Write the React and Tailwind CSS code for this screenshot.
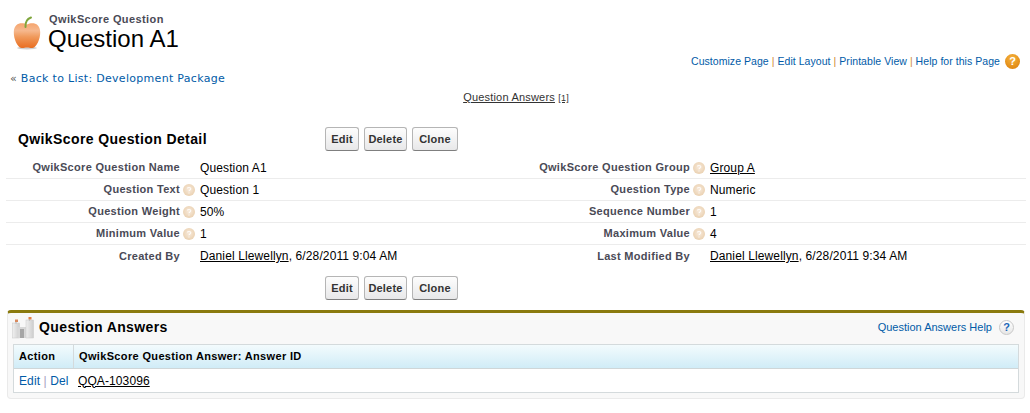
import React from "react";

const sans = "font-['Liberation_Sans',Arial,sans-serif]";

function Apple() {
  return (
    <svg width="28" height="36" viewBox="0 0 28 36" className="shrink-0 overflow-visible">
      <defs>
        <linearGradient id="ap" x1="0" y1="0" x2="0" y2="1">
          <stop offset="0" stopColor="#f5a56e" />
          <stop offset="0.3" stopColor="#f6b88e" />
          <stop offset="0.55" stopColor="#f09a5c" />
          <stop offset="1" stopColor="#e96d20" />
        </linearGradient>
      </defs>
      <ellipse cx="14" cy="33" rx="10" ry="1.500" fill="#cfcfcf" />
      <path d="M14 9.500C9 7 1 7.500 .8 17c-.2 7 3.700 15.500 7.700 16 2 .2 3.500-.5 5.500-.5s3.500 .7 5.500 .5c4-.5 7.900-9 7.700-16C27 7.500 19 7 14 9.500Z" fill="url(#ap)" />
      <path d="M12.500 12c-.3-4 1.500-8 5.500-9.500" fill="none" stroke="#7fa63c" strokeWidth="2" strokeLinecap="round" />
    </svg>
  );
}

function Hint() {
  return (
    <svg width="12" height="12" viewBox="0 0 12 12" className="block">
      <defs>
        <radialGradient id="hg" cx="0.5" cy="0.45" r="0.6">
          <stop offset="0" stopColor="#f8eadb" />
          <stop offset="1" stopColor="#e9cfae" />
        </radialGradient>
      </defs>
      <circle cx="6" cy="6" r="6" fill="url(#hg)" />
      <path d="M4.300 4.500c.2-1.300 3.500-1.500 3.500.3 0 1.200-1.800 1.200-1.800 2.500M6 8.600v1" fill="none" stroke="#fff" strokeWidth="1.100" opacity="0.85" />
    </svg>
  );
}

function Row({ l1, h1, v1, l2, h2, v2, link2 }) {
  return (
    <div className="flex h-[22px] items-center border-b border-[#ececec]">
      <Cell label={l1} hint={h1} value={v1} valueW="w-[336px]" />
      <Cell label={l2} hint={h2} value={v2} link={link2} valueW="flex-1" />
    </div>
  );
}

function Cell({ label, hint, value, link, valueW }) {
  return (
    <div className={`flex items-center ${valueW === "flex-1" ? "flex-1" : ""}`}>
      <div className="w-[174px] text-right text-[11px] font-bold tracking-[0.3px] text-[#4a4a56] relative">
        <span className="whitespace-nowrap">{label}</span>
        {hint && <span className="absolute right-[-15px] top-1/2 -translate-y-1/2"><Hint /></span>}
      </div>
      <div className={`pl-[20px] text-[12px] tracking-[0.12px] text-black whitespace-nowrap ${valueW}`}>
        {link ? <><a className="underline">{link}</a>{value}</> : value}
      </div>
    </div>
  );
}

function Btn({ children, w }) {
  return (
    <button className={`${w} h-[24px] rounded-[3px] border border-[#b5b5b5] border-b-[#7f7f7f] bg-[linear-gradient(#fdfdfd,#e8e8e9)] text-[11px] font-bold tracking-[0.2px] text-[#333]`}>
      {children}
    </button>
  );
}

function Buttons() {
  return (
    <div className="flex gap-[5px]">
      <Btn w="w-[34px]">Edit</Btn>
      <Btn w="w-[43px]">Delete</Btn>
      <Btn w="w-[46px]">Clone</Btn>
    </div>
  );
}

function Castle() {
  return (
    <svg width="22" height="22" viewBox="0 0 22 22" className="shrink-0">
      <defs>
        <linearGradient id="cg" x1="0" y1="0" x2="1" y2="0">
          <stop offset="0" stopColor="#f0f0f0" />
          <stop offset="1" stopColor="#cdcdcd" />
        </linearGradient>
      </defs>
      <rect x="0.500" y="6" width="7" height="15" fill="url(#cg)" stroke="#c8c8c8" strokeWidth="0.500" />
      <rect x="6" y="10" width="9" height="11" fill="#d8d8d8" />
      <rect x="8" y="12" width="4" height="9" fill="#a6a6a6" />
      <rect x="14" y="3" width="7.500" height="18" fill="url(#cg)" stroke="#c8c8c8" strokeWidth="0.500" />
      <rect x="3" y="2.500" width="3" height="2.500" fill="#d98a5e" />
      <rect x="16.500" y="0" width="3" height="2.500" fill="#e27f45" />
      <rect x="3.500" y="5" width="1" height="1.500" fill="#aaa" />
      <rect x="17" y="2.500" width="1" height="1" fill="#aaa" />
    </svg>
  );
}

export default function App() {
  return (
    <div className={`${sans} w-[1030px] h-[413px] bg-white overflow-hidden text-[12px]`}>
      <div className="flex pl-[13px] pt-[15px] h-[52px]">
        <Apple />
        <div className="ml-[7px]">
          <div className="ml-[1px] mt-[-2px] text-[11px] font-bold tracking-[0.4px] text-[#4a4a56] leading-[13px]">QwikScore Question</div>
          <div className="text-[24px] leading-[26px] text-black">Question A1</div>
        </div>
      </div>

      <div className="flex justify-end items-center pr-[10px] h-[17px] mt-[1px]">
        <span className="text-[10.500px] tracking-[0.05px] text-[#015ba7] whitespace-nowrap">
          Customize Page <span className="text-[#d08a35]">|</span> Edit Layout <span className="text-[#d08a35]">|</span> Printable View <span className="text-[#d08a35]">|</span> Help for this Page
        </span>
        <span className="ml-[5px] w-[15px] h-[15px] rounded-full bg-[radial-gradient(circle_at_45%_30%,#f6b33d,#d97a05)] text-white text-[11px] font-bold leading-[15px] text-center">?</span>
      </div>

      <div className="pl-[10px] mt-[1px] h-[19px] font-['DejaVu_Sans',Verdana,sans-serif] text-[11px] tracking-[0.3px] leading-[16px] text-[#015ba7]">
        <span className="text-[#555]">«</span> Back to List: Development Package
      </div>

      <div className="text-center h-[14px] text-[11px] tracking-[0.2px] leading-[14px] text-[#333] pl-[2px]">
        <a className="underline">Question Answers</a> <span className="text-[9px] underline">[1]</span>
      </div>

      <div className="mx-[6px] mt-[23px] w-[1020px]">
        <div className="flex items-center h-[24px]">
          <div className="w-[319px] pl-[12px] text-[14px] tracking-[0.4px] font-bold text-black">QwikScore Question Detail</div>
          <Buttons />
        </div>
        <div className="mt-[6px]">
          <Row l1="QwikScore Question Name" v1="Question A1" l2="QwikScore Question Group" h2 link2="Group A" />
          <Row l1="Question Text" h1 v1="Question 1" l2="Question Type" h2 v2="Numeric" />
          <Row l1="Question Weight" h1 v1="50%" l2="Sequence Number" h2 v2="1" />
          <Row l1="Minimum Value" h1 v1="1" l2="Maximum Value" h2 v2="4" />
        </div>
        <div className="flex h-[22px] items-center">
          <Cell label="Created By" link="Daniel Llewellyn" value=", 6/28/2011 9:04 AM" valueW="w-[336px]" />
          <Cell label="Last Modified By" link="Daniel Llewellyn" value=", 6/28/2011 9:34 AM" valueW="flex-1" />
        </div>
        <div className="flex pl-[319px] mt-[9px]"><Buttons /></div>
      </div>

      <div className="ml-[7px] mt-[10px] w-[1018px] h-[89px] bg-[#f8f8f8] border border-[#eaeaea] border-t-[3px] border-t-[#8a7a0e] rounded-[4px] px-[5px]">
        <div className="flex items-center h-[29px] pr-[5px]">
          <div className="-ml-[1px]"><Castle /></div>
          <span className="ml-[5px] text-[14px] tracking-[0.4px] font-bold text-black">Question Answers</span>
          <span className="ml-auto text-[11px] text-[#015ba7]">Question Answers Help</span>
          <span className="ml-[7px] w-[15px] h-[15px] rounded-full border border-[#c8c8c8] bg-[linear-gradient(#ffffff,#e6e6e6)] text-[#1a66b8] text-[11px] font-bold leading-[13px] text-center">?</span>
        </div>
        <div className="border border-[#d4dadc] bg-white mt-[2px]">
          <div className="flex h-[24px] items-center bg-[linear-gradient(#f3fbfd,#d0ecf7)] border-b border-[#cfd6d8] text-[11px] tracking-[0.35px] font-bold text-black">
            <div className="w-[60px] pl-[5px] h-full flex items-center border-r border-[#d4dadc]">Action</div>
            <div className="pl-[5px]">QwikScore Question Answer: Answer ID</div>
          </div>
          <div className="flex h-[23px] items-center text-[12px] tracking-[0.1px]">
            <div className="w-[60px] pl-[5px] whitespace-nowrap text-[#015ba7]">Edit <span className="text-[#a8a0c0]">|</span> Del</div>
            <a className="pl-[4px] underline text-black">QQA-103096</a>
          </div>
        </div>
      </div>
    </div>
  );
}
